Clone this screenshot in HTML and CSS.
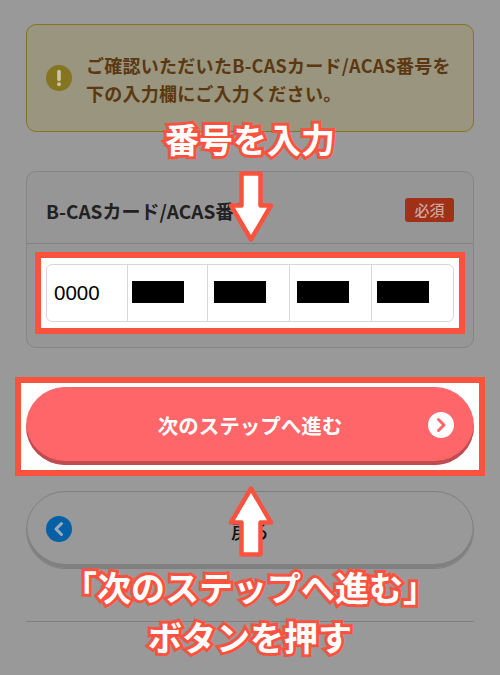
FILE: index.html
```html
<!DOCTYPE html>
<html lang="ja">
<head>
<meta charset="utf-8">
<title>番号を入力</title>
<link rel="stylesheet" href="styles.css">
</head>
<body>
<main class="page">
  <section class="notice">
    <svg class="notice-icon" viewBox="0 0 26 26"><circle cx="13" cy="13" r="13" fill="#857420"/><path d="M13 6.5v8" stroke="#c9c5a4" stroke-width="3.6" stroke-linecap="round"/><circle cx="13" cy="19.2" r="2" fill="#c9c5a4"/></svg>
    <p class="notice-text">ご確認いただいたB-CASカード/ACAS番号を<br>下の入力欄にご入力ください。</p>
  </section>

  <section class="card">
    <header class="card-head">
      <h2 class="card-title">B-CASカード/ACAS番号</h2>
      <span class="badge">必須</span>
    </header>
    <div class="highlight input-highlight">
      <div class="inputs">
        <div class="cell">0000</div>
        <div class="cell"><span class="mask"></span></div>
        <div class="cell"><span class="mask"></span></div>
        <div class="cell"><span class="mask"></span></div>
        <div class="cell"><span class="mask"></span></div>
      </div>
    </div>
  </section>

  <div class="highlight button-highlight">
    <button class="btn btn-next">
      <span>次のステップへ進む</span>
      <svg class="btn-icon btn-icon-right" viewBox="0 0 26 26"><circle cx="13" cy="13" r="13" fill="#fff"/><path d="M10.5 7.5l5.5 5.5-5.5 5.5" fill="none" stroke="#ff6669" stroke-width="3" stroke-linecap="round" stroke-linejoin="round"/></svg>
    </button>
  </div>

  <button class="btn btn-back">
    <svg class="btn-icon btn-icon-left" viewBox="0 0 26 26"><circle cx="13" cy="13" r="13" fill="#0560a6"/><path d="M15.5 7.5L10 13l5.5 5.5" fill="none" stroke="#9ab" stroke-width="3" stroke-linecap="round" stroke-linejoin="round"/></svg>
    <span>戻る</span>
  </button>

  <hr class="rule">
</main>

<div class="caption caption-top">番号を入力</div>
<svg class="arrow arrow-down" viewBox="0 0 46 72"><path d="M13.5 2.5h19v32h10.500L23 68.500 3 34.500h10.500z" fill="#fff" stroke="#f95340" stroke-width="4.500" stroke-linejoin="round"/></svg>
<svg class="arrow arrow-up" viewBox="0 0 46 72"><path d="M13.5 69.500h19v-32h10.500L23 3.500 3 37.500h10.500z" fill="#fff" stroke="#f95340" stroke-width="4.500" stroke-linejoin="round"/></svg>
<div class="caption caption-bottom">「次のステップへ進む」<br>ボタンを押す</div>
</body>
</html>
```
FILE: styles.css
```css
* { box-sizing: border-box; }
html, body { margin: 0; height: 675px; overflow: hidden; }
body {
  position: relative;
  width: 500px;
  background: #999;
  font-family: "Noto Sans CJK JP", "Noto Sans", sans-serif;
}
.page { padding: 24px 26px 0; display: flex; flex-direction: column; }

.notice {
  height: 108px;
  display: flex;
  align-items: center;
  gap: 14px;
  padding: 0 19px;
  background: #99957e;
  border: 1px solid #857420;
  border-radius: 10px;
}
.notice-icon { width: 26px; height: 26px; flex: none; }
.notice-text {
  margin: 2px 0 0;
  font-size: 18px;
  letter-spacing: 0.27px;
  font-weight: 700;
  line-height: 28px;
  color: #5b3811;
  white-space: nowrap;
}

.card {
  margin-top: 39px;
  height: 177px;
  border: 1px solid #858585;
  border-radius: 10px;
  background: #969696;
}
.card-head {
  height: 72px;
  display: flex;
  align-items: center;
  justify-content: space-between;
  padding: 5px 19px 0;
  border-bottom: 1px solid #828282;
}
.card-title { margin: 0; font-size: 19px; font-weight: 700; color: #222; white-space: nowrap; }
.badge {
  width: 49px;
  height: 24px;
  border-radius: 3px;
  background: #a03018;
  color: #cfa49b;
  font-size: 15px;
  font-weight: 500;
  line-height: 24px;
  text-align: center;
}

.highlight { background: #fff; border: 6px solid #f95340; }
.input-highlight { margin: 8px 8px 0; height: 82px; padding: 6px 5px; }
.inputs {
  height: 58px;
  display: grid;
  grid-template-columns: 80px 80px 82px 82px 1fr;
  border: 1.5px solid #d8d8d8;
  border-radius: 6px;
}
.cell {
  display: flex;
  align-items: center;
  padding: 0 0 0 7px;
  font-family: "Liberation Sans", sans-serif;
  font-size: 20.5px;
  color: #000;
  border-left: 1.5px solid #d8d8d8;
}
.cell:first-child { border-left: 0; }
.mask { width: 52px; height: 22px; margin: -2px 0 0 -3px; background: #000; }
.cell:nth-child(3) .mask { margin-left: -1px; }
.cell:nth-child(4) .mask { margin-left: 0; }
.cell:nth-child(5) .mask { margin-left: -2px; }

.button-highlight {
  margin: 29px -11px 0;
  height: 99px;
  padding: 4px 5px 0;
}
.btn {
  position: relative;
  display: flex;
  align-items: center;
  justify-content: center;
  width: 448px;
  height: 78px;
  padding: 0;
  border-radius: 39px;
  font-family: inherit;
  font-size: 20.5px;
  font-weight: 700;
}
.btn-next {
  height: 78px;
  padding-bottom: 4px;
  background: #ff6669;
  color: #fff;
  border: 0;
  border-top: 1px solid #f4696d;
  box-shadow: inset 0 -4px 0 #bf4d50;
}
.btn-back {
  margin-top: 15px;
  background: #999;
  color: #111;
  font-size: 19px;
  font-weight: 500;
  border: 1px solid #7f7f7f;
  box-shadow: inset 0 -4px 0 #808080;
}
.btn-icon { position: absolute; top: 24px; width: 26px; height: 26px; }
.btn-icon-right { right: 20px; }
.btn-icon-left { left: 19px; top: 24px; }

.rule { margin: 52px 0 0; border: 0; border-top: 1px solid #808080; }

.caption {
  position: absolute;
  left: 0;
  width: 500px;
  text-align: center;
  color: #fff;
  font-weight: 700;
  font-size: 34px;
  -webkit-text-stroke: 6px #f95340;
  paint-order: stroke fill;
  white-space: nowrap;
}
.caption-top { top: 116px; line-height: 46px; }
.caption-bottom { top: 562px; line-height: 50px; }
.arrow { position: absolute; width: 46px; height: 72px; }
.arrow-down { left: 228px; top: 171px; }
.arrow-up { left: 228px; top: 485px; }
```
